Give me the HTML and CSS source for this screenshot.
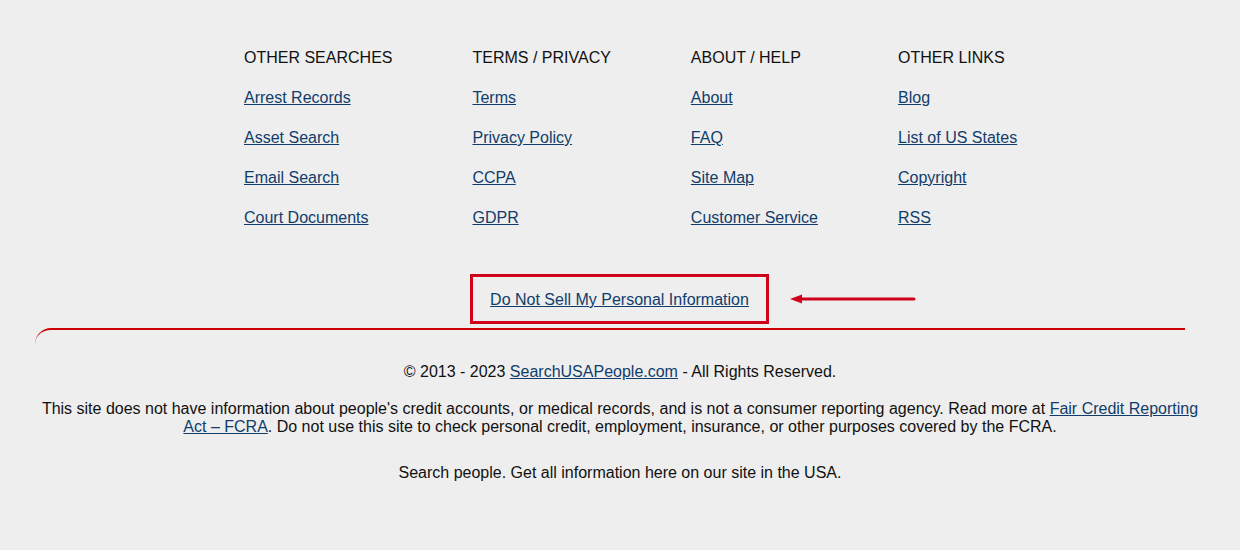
FILE: index.html
```html
<!DOCTYPE html>
<html lang="en">
<head>
<meta charset="utf-8">
<title>Footer</title>
<link rel="stylesheet" href="styles.css">
</head>
<body>
<footer class="footer">
  <div class="cols">
    <div class="col">
      <div class="col-title">OTHER SEARCHES</div>
      <a href="#">Arrest Records</a>
      <a href="#">Asset Search</a>
      <a href="#">Email Search</a>
      <a href="#">Court Documents</a>
    </div>
    <div class="col">
      <div class="col-title">TERMS / PRIVACY</div>
      <a href="#">Terms</a>
      <a href="#">Privacy Policy</a>
      <a href="#">CCPA</a>
      <a href="#">GDPR</a>
    </div>
    <div class="col">
      <div class="col-title">ABOUT / HELP</div>
      <a href="#">About</a>
      <a href="#">FAQ</a>
      <a href="#">Site Map</a>
      <a href="#">Customer Service</a>
    </div>
    <div class="col">
      <div class="col-title">OTHER LINKS</div>
      <a href="#">Blog</a>
      <a href="#">List of US States</a>
      <a href="#">Copyright</a>
      <a href="#">RSS</a>
    </div>
  </div>

  <div class="dns-row">
    <div class="dns-box">
      <a href="#">Do Not Sell My Personal Information</a>
      <svg class="arrow" width="126" height="12" viewBox="0 0 126 12" aria-hidden="true">
        <line x1="8" y1="6" x2="124" y2="6" stroke="#d0021b" stroke-width="3" stroke-linecap="round"/>
        <polygon points="0,6 12,1.5 12,10.5" fill="#d0021b"/>
      </svg>
    </div>
  </div>

  <div class="divider"></div>

  <div class="bottom">
    <p class="copy">© 2013 - 2023 <a href="#">SearchUSAPeople.com</a> - All Rights Reserved.</p>
    <p class="disclaimer">This site does not have information about people's credit accounts, or medical records, and is not a consumer reporting agency. Read more at <a href="#">Fair Credit Reporting Act – FCRA</a>. Do not use this site to check personal credit, employment, insurance, or other purposes covered by the FCRA.</p>
    <p class="tagline">Search people. Get all information here on our site in the USA.</p>
  </div>
</footer>
</body>
</html>
```

FILE: styles.css
```css
html, body {
  margin: 0;
  padding: 0;
  background: #eeeeee;
}

body {
  font-family: "Liberation Sans", Arial, sans-serif;
  font-size: 16px;
  line-height: 18px;
  color: #111111;
}

a {
  color: #103d6b;
  text-decoration: underline;
}

.footer {
  padding-top: 49px;
  padding-bottom: 60px;
}

.cols {
  display: flex;
  gap: 80px;
  padding-left: 244px;
}

.col {
  display: flex;
  flex-direction: column;
  align-items: flex-start;
  gap: 22px;
}

.col-title {
  color: #111111;
}

.dns-row {
  display: flex;
  justify-content: center;
  margin-top: 47px;
}

.dns-box {
  position: relative;
  border: 3px solid #d0021b;
  padding: 14px 17px 12px;
  margin-right: 1px;
}

.arrow {
  position: absolute;
  left: calc(100% + 24px);
  top: 50%;
  margin-top: -6px;
}

.divider {
  margin: 4px 55px 0 35px;
  height: 16px;
  border-top: 2px solid #cc0000;
  border-top-left-radius: 16px;
}

.bottom {
  padding: 0 40px;
  text-align: center;
}

.bottom p {
  margin: 0;
}

.copy {
  margin-top: 17px !important;
}

.disclaimer {
  margin-top: 19px !important;
}

.tagline {
  margin-top: 28px !important;
}
```
